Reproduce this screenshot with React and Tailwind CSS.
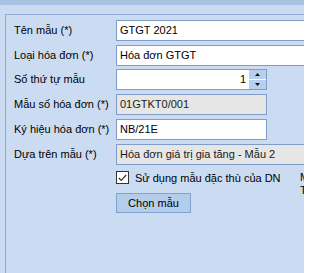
import React, { useState } from 'react';

const font = { fontFamily: '"Liberation Sans", Arial, sans-serif' };

const Row = ({ label, children, className = '' }) => (
  <div className={`flex items-center h-[21px] ${className}`}>
    <div className="w-[102px] shrink-0 text-[11px] text-black whitespace-nowrap">{label}</div>
    {children}
  </div>
);

const TextBox = ({ value, width = 'w-[200px]', disabled = false }) => (
  <div
    className={`${width} shrink-0 h-[21px] border border-[#7f9dcb] flex items-center pl-[3px] text-[11px] whitespace-nowrap overflow-hidden ${
      disabled ? 'bg-[#e6e6e6] text-[#1a1a1a]' : 'bg-white text-black'
    }`}
  >
    {value}
  </div>
);

const App = () => {
  const [checked, setChecked] = useState(true);

  return (
    <div style={font} className="w-[304px] h-[273px] overflow-hidden bg-[#cbdcf2]">
      {/* top strip */}
      <div className="h-[5px] bg-[#a8c2e4]" />

      <div className="pt-[9px] pl-[5px]">
        {/* group box */}
        <div className="w-[299px] h-[259px] overflow-hidden border-t border-l border-[#8eacd8] pt-[5px] pl-[8px]">
          <Row label="Tên mẫu (*)">
            <TextBox value="GTGT 2021" />
          </Row>

          <Row label="Loại hóa đơn (*)" className="mt-[4px]">
            <TextBox value="Hóa đơn GTGT" />
          </Row>

          <Row label="Số thứ tự mẫu" className="mt-[3px]">
            <div className="w-[151px] shrink-0 h-[21px] border border-[#7f9dcb] bg-white flex">
              <div className="flex-1 flex items-center justify-end pr-[3px] text-[11px] text-black">1</div>
              <div className="w-[17px] flex flex-col bg-[#b8d0ee]">
                <div className="flex-1 flex items-center justify-center border-b border-white">
                  <svg width="5" height="3" viewBox="0 0 5 3">
                    <path d="M2.5 0 L5 3 L0 3 Z" fill="#111" />
                  </svg>
                </div>
                <div className="flex-1 flex items-center justify-center">
                  <svg width="5" height="3" viewBox="0 0 5 3">
                    <path d="M0 0 L5 0 L2.5 3 Z" fill="#111" />
                  </svg>
                </div>
              </div>
            </div>
          </Row>

          <Row label="Mẫu số hóa đơn (*)" className="mt-[4px]">
            <TextBox value="01GTKT0/001" width="w-[151px]" disabled />
          </Row>

          <Row label="Ký hiệu hóa đơn (*)" className="mt-[4px]">
            <TextBox value="NB/21E" width="w-[151px]" />
          </Row>

          <Row label="Dựa trên mẫu (*)" className="mt-[4px]">
            <TextBox value="Hóa đơn giá trị gia tăng - Mẫu 2" disabled />
          </Row>

          {/* checkbox row */}
          <div className="flex h-[14px] mt-[6px]">
            <div className="w-[102px] shrink-0" />
            <label className="w-[184px] shrink-0 flex items-start gap-[6px] cursor-pointer">
              <input
                type="checkbox"
                className="sr-only"
                checked={checked}
                onChange={(e) => setChecked(e.target.checked)}
              />
              <span className="w-[13px] h-[13px] shrink-0 border border-[#333] bg-white flex items-center justify-center">
                {checked && (
                  <svg width="9" height="8" viewBox="0 0 9 8">
                    <path d="M0.8 4 L3.3 6.5 L8.2 1" stroke="#333" strokeWidth="1.2" fill="none" />
                  </svg>
                )}
              </span>
              <span className="text-[11px] text-black whitespace-nowrap leading-[14px]">Sử dụng mẫu đặc thù của DN</span>
            </label>
            <div className="text-[11px] text-black leading-[13px] whitespace-nowrap">
              <div>Mẫu</div>
              <div>Tên</div>
            </div>
          </div>

          {/* button row */}
          <div className="flex mt-[8px]">
            <div className="w-[102px] shrink-0" />
            <button className="w-[75px] h-[20px] bg-[#b4cdea] border border-[#7ea2d2] text-[11px] text-black">
              Chọn mẫu
            </button>
          </div>
        </div>
      </div>
    </div>
  );
};

export default App;
